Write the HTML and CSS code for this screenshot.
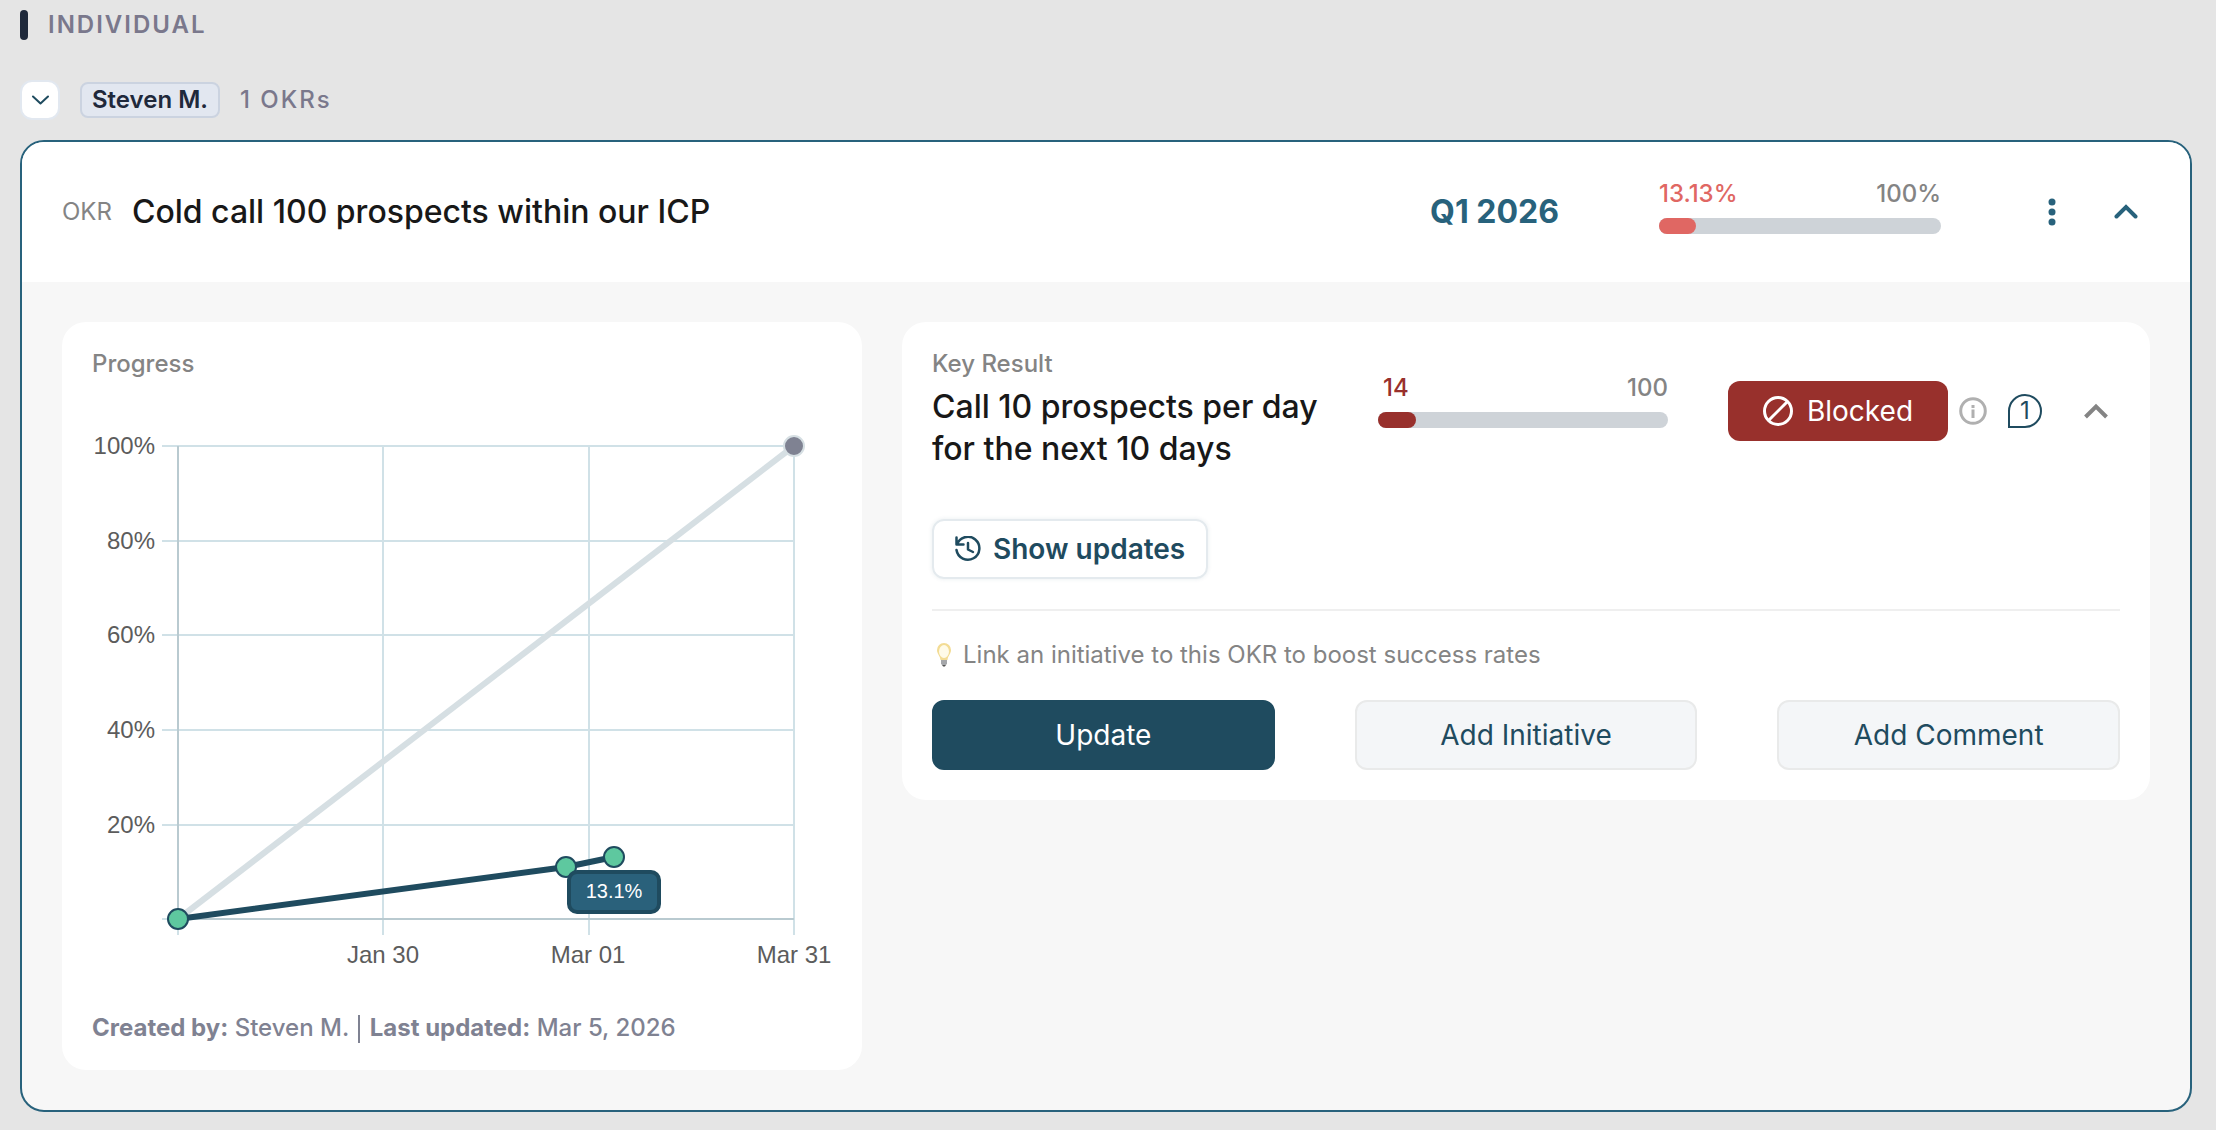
FILE: index.html
```html
<!DOCTYPE html>
<html lang="en">
<head>
<meta charset="UTF-8" />
<meta name="viewport" content="width=device-width, initial-scale=1" />
<title>Individual OKRs</title>
<link rel="stylesheet" href="styles.css">
</head>
<body>
<main class="page">
  <h2 class="section-title">INDIVIDUAL</h2>

  <div class="owner-row">
    <button type="button" class="owner-toggle" aria-label="Collapse Steven M.">
      <svg width="18" height="18" viewBox="0 0 18 18" fill="none" stroke="currentColor" stroke-width="2" stroke-linecap="round" stroke-linejoin="round"><path d="M2 5.500l7.500 7 7.500-7"/></svg>
    </button>
    <span class="owner-name">Steven M.</span>
    <span class="owner-count">1 OKRs</span>
  </div>

  <article class="okr-card">
    <header class="okr-header">
      <span class="okr-label">OKR</span>
      <h3 class="okr-title">Cold call 100 prospects within our ICP</h3>
      <span class="okr-quarter">Q1 2026</span>
      <div class="meter okr-meter">
        <div class="meter-labels"><span class="meter-current">13.13%</span><span>100%</span></div>
        <div class="meter-track"><div class="meter-fill" style="width: 13.13%"></div></div>
      </div>
      <button type="button" class="icon-btn menu-btn" aria-label="More options">
        <svg width="8" height="28" viewBox="0 0 8 28" fill="currentColor"><circle cx="4" cy="4" r="3.5"/><circle cx="4" cy="14" r="3.5"/><circle cx="4" cy="24" r="3.5"/></svg>
      </button>
      <button type="button" class="icon-btn" aria-label="Collapse OKR">
        <svg width="24" height="16" viewBox="0 0 24 16" fill="none" stroke="currentColor" stroke-width="4" stroke-linecap="round"><path d="M2.500 12.500L12 3l9.500 9.500"/></svg>
      </button>
    </header>

    <div class="okr-body">
      <section class="panel progress-panel">
        <h4 class="panel-label">Progress</h4>
        <svg class="chart" viewBox="0 0 740 560" role="img" aria-label="Progress over time">
          <!-- grid -->
          <g stroke="#d0e1e7" stroke-width="2" fill="none">
            <path d="M70 47H702M70 142H702M70 236H702M70 331H702M70 426H702M70 520H86"/>
            <path d="M291 47V536M497 47V536M702 47V536M86 520V536"/>
          </g>
          <path d="M86 47V520H702" stroke="#b9cad0" stroke-width="2" fill="none"/>
          <!-- series -->
          <path d="M86 520L702 47" stroke="#d6dfe3" stroke-width="6"/>
          <path d="M86 520L474 468L522 458" stroke="#1f4b5f" stroke-width="6" fill="none"/>
          <circle cx="702" cy="47" r="10" fill="#7f8292" stroke="#d6dfe3" stroke-width="2"/>
          <g fill="#5ec89f" stroke="#1f4b5f" stroke-width="2">
            <circle cx="86" cy="520" r="10"/><circle cx="474" cy="468" r="10"/><circle cx="522" cy="458" r="10"/>
          </g>
          <!-- axis labels -->
          <g class="tick tick-y">
            <text x="63" y="55">100%</text>
            <text x="63" y="150">80%</text>
            <text x="63" y="244">60%</text>
            <text x="63" y="339">40%</text>
            <text x="63" y="434">20%</text>
          </g>
          <g class="tick tick-x">
            <text x="291" y="564">Jan 30</text>
            <text x="496" y="564">Mar 01</text>
            <text x="702" y="564">Mar 31</text>
          </g>
          <!-- tooltip -->
          <rect x="477" y="473" width="90" height="40" rx="8" fill="#2a617b" stroke="#1f4b5f" stroke-width="4"/>
          <text class="tip" x="522" y="499">13.1%</text>
        </svg>
        <p class="progress-meta"><strong>Created by:</strong> Steven M. <span class="meta-divider"></span> <strong>Last updated:</strong> Mar 5, 2026</p>
      </section>

      <section class="panel result-panel">
        <div class="result-head">
          <div class="result-text">
            <h4 class="panel-label">Key Result</h4>
            <p class="result-title">Call 10 prospects per day for the next 10 days</p>
          </div>
          <div class="meter result-meter">
            <div class="meter-labels"><span class="meter-current">14</span><span>100</span></div>
            <div class="meter-track"><div class="meter-fill" style="width: 13.13%"></div></div>
          </div>
          <button type="button" class="status-btn">
            <svg width="30" height="30" viewBox="0 0 30 30" fill="none" stroke="currentColor" stroke-width="3"><circle cx="15" cy="15" r="13.5"/><path d="M5.5 24.5l19-19"/></svg>
            Blocked
          </button>
          <button type="button" class="icon-btn info-btn" aria-label="Status info">
            <svg width="28" height="28" viewBox="0 0 28 28" fill="none" stroke="currentColor" stroke-width="3"><circle cx="14" cy="14" r="12.3"/><path d="M14 12.5V21M14 8v3"/></svg>
          </button>
          <button type="button" class="comment-count" aria-label="1 comment">1</button>
          <button type="button" class="icon-btn result-toggle" aria-label="Collapse key result">
            <svg width="24" height="16" viewBox="0 0 24 16" fill="none" stroke="currentColor" stroke-width="4"><path d="M1.5 14L12 3.5 22.5 14"/></svg>
          </button>
        </div>

        <button type="button" class="updates-btn">
          <svg width="26" height="26" viewBox="0 0 26 26" fill="none" stroke="currentColor" stroke-width="2.5" stroke-linecap="round" stroke-linejoin="round"><path d="M1.500 1.500v7h7M2 8.500A11.500 11.500 0 1 1 1.500 14"/><path d="M13 7v6.500l5 2.500"/></svg>
          Show updates
        </button>

        <hr class="divider">

        <p class="hint">
          <svg width="24" height="24" viewBox="0 0 24 24" aria-hidden="true">
            <path d="M12 0a7 7 0 0 0-7 7c0 4 3 5.500 3.500 10h7c.5-4.500 3.500-6 3.500-10a7 7 0 0 0-7-7z" fill="#f3dc94"/>
            <ellipse cx="12" cy="8.500" rx="5" ry="6.500" fill="#fffbe8"/>
            <path d="M9 17h6v3.500l-1.500 2.500h-3L9 20.500z" fill="#a5a7aa"/>
            <path d="M10.500 22h3l-.5 1.500h-2z" fill="#555"/>
          </svg>
          Link an initiative to this OKR to boost success rates
        </p>

        <div class="actions">
          <button type="button" class="action action-primary">Update</button>
          <button type="button" class="action">Add Initiative</button>
          <button type="button" class="action">Add Comment</button>
        </div>
      </section>
    </div>
  </article>
</main>
</body>
</html>
```
FILE: styles.css
```css
/* --- RESET & BASIC STYLE --- */
*, *::before, *::after {
  box-sizing: border-box;
}
body {
  margin: 0;
  background: #e5e5e5;
  color: #181818;
  font-family: Inter, "Liberation Sans", sans-serif;
  font-size: 24px;
  line-height: 32px;
}
h2, h3, h4, p {
  margin: 0;
  font-weight: 400;
}
button {
  padding: 0;
  border: none;
  background: none;
  font: inherit;
  color: inherit;
  cursor: pointer;
}
svg {
  display: block;
  flex-shrink: 0;
}
.page {
  padding: 9px 24px 16px 20px;
}
/* --- SECTION HEADING --- */
.section-title {
  display: flex;
  align-items: center;
  gap: 20px;
  font-size: 24px;
  font-weight: 600;
  letter-spacing: 2px;
  color: #7a788c;
}
.section-title::before {
  content: "";
  width: 8px;
  height: 30px;
  border-radius: 4px;
  background: #1f293b;
}
/* --- OWNER ROW --- */
.owner-row {
  display: flex;
  align-items: center;
  margin: 39px 0 20px;
}
.owner-toggle {
  display: flex;
  align-items: center;
  justify-content: center;
  width: 40px;
  height: 40px;
  border: 2px solid #e2e8f0;
  border-radius: 12px;
  background: #fff;
  color: #1f4b5f;
}
.owner-name {
  margin-left: 20px;
  padding: 0 10px;
  border: 2px solid #cbd3e0;
  border-radius: 8px;
  background: #e2e7f0;
  color: #1f293b;
  font-weight: 600;
}
.owner-count {
  margin-left: 20px;
  font-weight: 500;
  letter-spacing: 2px;
  color: #7a788c;
}
/* --- OKR CARD --- */
.okr-card {
  border: 2px solid #28627c;
  border-radius: 24px;
  background: #f7f7f7;
  overflow: hidden;
}
.okr-header {
  display: flex;
  align-items: center;
  height: 140px;
  padding: 0 52px 0 40px;
  background: #fff;
}
.okr-label {
  margin-right: 20px;
  color: #848484;
}
.okr-title {
  flex: 1;
  font-size: 32px;
  font-weight: 500;
}
.okr-quarter {
  margin-right: 100px;
  font-size: 32px;
  font-weight: 700;
  color: #28627c;
}
.icon-btn {
  display: flex;
  color: #28627c;
}
.menu-btn {
  margin: 0 58px 0 107px;
}
/* --- METERS --- */
.meter-labels {
  display: flex;
  justify-content: space-between;
  margin-bottom: 8px;
  font-weight: 500;
  color: #848484;
}
.meter-track {
  height: 16px;
  border-radius: 8px;
  background: #ced3d8;
}
.meter-fill {
  height: 100%;
  border-radius: 8px;
  background: #e06763;
}
.okr-meter {
  width: 282px;
  margin-bottom: 12px;
}
.okr-meter .meter-current {
  color: #e06763;
}
/* --- BODY --- */
.okr-body {
  display: grid;
  grid-template-columns: 800px 1fr;
  gap: 40px;
  align-items: start;
  padding: 40px;
}
.panel {
  border-radius: 24px;
  background: #fff;
}
.panel-label {
  font-weight: 500;
  color: #848484;
}
/* --- PROGRESS --- */
.progress-panel {
  padding: 26px 30px;
}
.chart {
  width: 100%;
  margin-top: 19px;
  overflow: visible;
}
.tick {
  font-family: "Liberation Sans", Arial, sans-serif;
  fill: #5c5c5c;
}
.tick-y {
  text-anchor: end;
}
.tick-x {
  text-anchor: middle;
}
.tip {
  font-family: "Liberation Sans", Arial, sans-serif;
  font-size: 20px;
  text-anchor: middle;
  fill: #fff;
}
.progress-meta {
  margin-top: 53px;
  font-weight: 500;
  color: #7f8292;
}
.progress-meta strong {
  font-weight: 700;
}
.meta-divider {
  display: inline-block;
  width: 2px;
  height: 28px;
  margin: 0 3px;
  background: #7f8292;
  vertical-align: middle;
}
/* --- KEY RESULT --- */
.result-panel {
  padding: 26px 30px 30px;
}
.result-head {
  display: flex;
  align-items: center;
}
.result-text {
  flex: 1;
  padding-bottom: 4px;
}
.result-title {
  max-width: 400px;
  margin-top: 6px;
  font-size: 32px;
  font-weight: 500;
  line-height: 42px;
}
.result-meter {
  width: 290px;
  margin: 0 60px 22px 0;
}
.result-meter .meter-labels {
  padding-left: 5px;
}
.result-meter .meter-current {
  color: #98302c;
}
.result-meter .meter-fill {
  background: #98302c;
}
.status-btn {
  display: flex;
  align-items: center;
  justify-content: center;
  gap: 14px;
  width: 220px;
  height: 60px;
  border-radius: 12px;
  background: #98302c;
  color: #fff;
  font-size: 28px;
}
.info-btn {
  margin: 0 21px 0 11px;
  color: #b0b0b0;
}
.comment-count {
  width: 34px;
  height: 34px;
  border: 2px solid #1f4b5f;
  border-radius: 50% 50% 50% 0;
  color: #1f4b5f;
  line-height: 28px;
}
.result-toggle {
  margin: 0 12px 0 42px;
  color: #848484;
}
.updates-btn {
  display: flex;
  align-items: center;
  gap: 12px;
  height: 60px;
  margin-top: 45px;
  padding: 0 21px;
  border: 2px solid #e4eaee;
  border-radius: 12px;
  color: #1f4b5f;
  font-size: 28px;
  font-weight: 600;
  box-shadow: 0 0 4px rgba(31, 75, 95, 0.1);
}
.divider {
  height: 2px;
  margin: 30px 0 28px;
  border: none;
  background: #efefef;
}
.hint {
  display: flex;
  align-items: center;
  gap: 7px;
  color: #848484;
}
.actions {
  display: grid;
  grid-template-columns: repeat(3, 1fr);
  gap: 80px;
  margin-top: 29px;
}
.action {
  height: 70px;
  border: 2px solid #e9eaea;
  border-radius: 12px;
  background: #f4f6f8;
  color: #1f4b5f;
  font-size: 28px;
}
.action-primary {
  border-color: #1f4b5f;
  background: #1f4b5f;
  color: #fff;
}
```
